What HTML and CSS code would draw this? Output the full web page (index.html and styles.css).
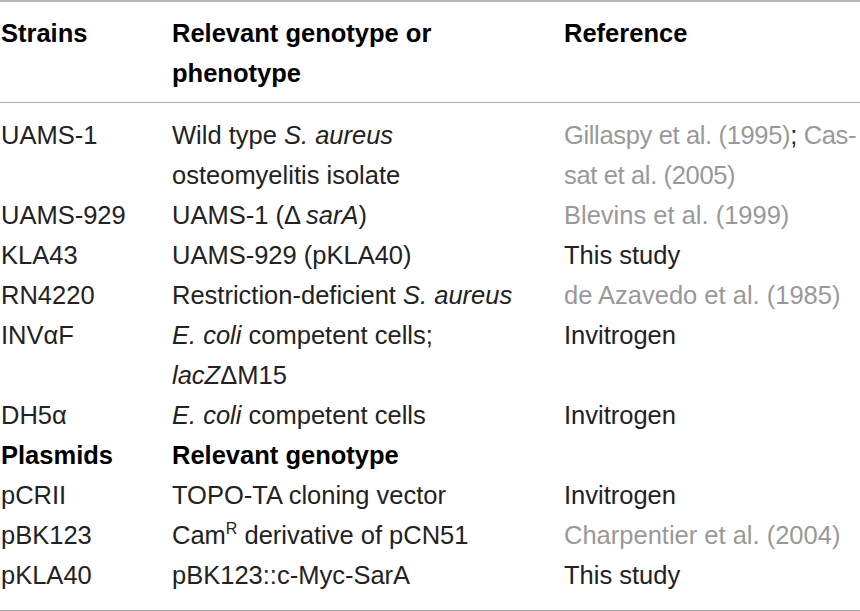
FILE: index.html
```html
<!DOCTYPE html>
<html>
<head>
<meta charset="utf-8">
<link rel="stylesheet" href="styles.css">
</head>
<body>
<table class="tbl">
  <colgroup>
    <col class="c1"><col class="c2"><col class="c3">
  </colgroup>
  <thead>
    <tr>
      <th>Strains</th>
      <th>Relevant genotype or<br>phenotype</th>
      <th>Reference</th>
    </tr>
  </thead>
  <tbody>
    <tr class="first">
      <td>UAMS-1</td>
      <td>Wild type <i>S. aureus</i><br>osteomyelitis isolate</td>
      <td class="tight"><span class="ref">Gillaspy et al. (1995)</span>; <span class="ref">Cas-<br>sat et al. (2005)</span></td>
    </tr>
    <tr>
      <td>UAMS-929</td>
      <td>UAMS-1 (Δ&#8201;<i>sarA</i>)</td>
      <td><span class="ref">Blevins et al. (1999)</span></td>
    </tr>
    <tr>
      <td>KLA43</td>
      <td>UAMS-929 (pKLA40)</td>
      <td>This study</td>
    </tr>
    <tr>
      <td>RN4220</td>
      <td>Restriction-deficient <i>S. aureus</i></td>
      <td><span class="ref">de Azavedo et al. (1985)</span></td>
    </tr>
    <tr>
      <td>INVαF</td>
      <td><i>E. coli</i> competent cells;<br><i>lacZ</i>ΔM15</td>
      <td>Invitrogen</td>
    </tr>
    <tr>
      <td>DH5α</td>
      <td><i>E. coli</i> competent cells</td>
      <td>Invitrogen</td>
    </tr>
    <tr class="sub">
      <td>Plasmids</td>
      <td>Relevant genotype</td>
      <td></td>
    </tr>
    <tr>
      <td>pCRII</td>
      <td>TOPO-TA cloning vector</td>
      <td>Invitrogen</td>
    </tr>
    <tr>
      <td>pBK123</td>
      <td>Cam<sup>R</sup> derivative of pCN51</td>
      <td><span class="ref">Charpentier et al. (2004)</span></td>
    </tr>
    <tr class="last">
      <td>pKLA40</td>
      <td>pBK123::c-Myc-SarA</td>
      <td>This study</td>
    </tr>
  </tbody>
</table>
</body>
</html>
```

FILE: styles.css
```css
html, body {
  margin: 0;
  padding: 0;
  background: #fff;
}
body {
  font-family: "Liberation Sans", Arial, sans-serif;
  font-size: 25.5px;
  line-height: 40px;
  color: #222;
  overflow: hidden;
}
.tbl {
  width: 860px;
  table-layout: fixed;
  border-collapse: collapse;
  border-top: 2px solid #b8b8b8;
  border-bottom: 1px solid #a8a8a8;
}
.c1 { width: 171px; }
.c2 { width: 392px; }
.c3 { width: 297px; }
th, td {
  padding: 0 0 0 1px;
  text-align: left;
  vertical-align: top;
  white-space: nowrap;
}
th {
  font-weight: bold;
  color: #000;
  padding-top: 11px;
  padding-bottom: 9px;
  border-bottom: 1px solid #a8a8a8;
}
tr.first td { padding-top: 12px; }
tr.last td { padding-bottom: 15px; }
tr.sub td {
  font-weight: bold;
  color: #000;
}
.tight { letter-spacing: -0.35px; }
.ref { color: #999; }
i { font-style: italic; }
sup {
  font-size: 16px;
  line-height: 0;
  vertical-align: 10px;
}
```
